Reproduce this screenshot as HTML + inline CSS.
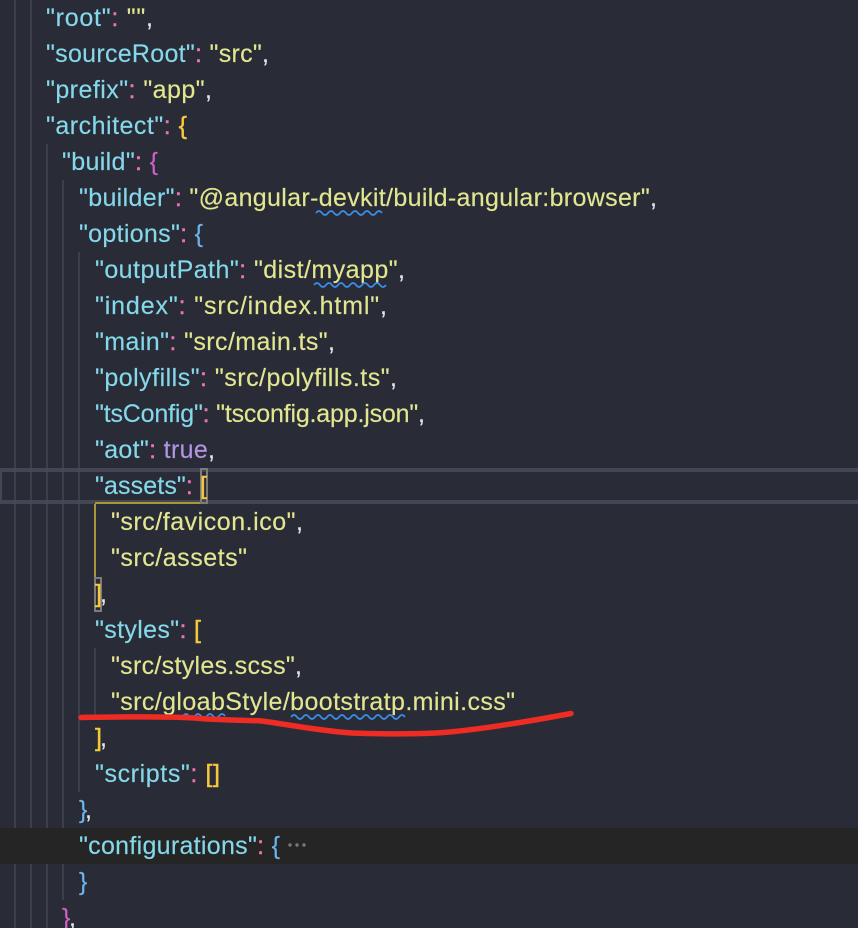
<!DOCTYPE html>
<html><head><meta charset="utf-8"><style>
html,body{margin:0;padding:0;background:#292b37;width:858px;height:928px;overflow:hidden}
svg{display:block}
text{font-family:"Liberation Sans",sans-serif;font-size:25px;fill:#e3e5e8;stroke:#e3e5e8;stroke-width:.15px;white-space:pre}
.k{fill:#85d8ea;stroke:#85d8ea}.s{fill:#e2e690;stroke:#e2e690}.c{fill:#ee75b0;stroke:#ee75b0;stroke-width:.4px}.y{fill:#f6c83c;stroke:#f6c83c;stroke-width:.4px}.p{fill:#cf62c8;stroke:#cf62c8}.b{fill:#6cb6ec;stroke:#6cb6ec}.t{fill:#b394e0;stroke:#b394e0}
</style></head><body>
<svg width="858" height="928" viewBox="0 0 858 928" xmlns="http://www.w3.org/2000/svg">
<rect width="858" height="928" fill="#292b37"/>
<g fill="#3c3e4b">
<rect x="14" y="0" width="2" height="928"/>
<rect x="30" y="0" width="2" height="928"/>
<rect x="46" y="144" width="2" height="784"/>
<rect x="62" y="180" width="2" height="720"/>
<rect x="78" y="252" width="2" height="540"/>
<rect x="94" y="648" width="2" height="72"/>
</g>
<g fill="#474959" fill-opacity=".9">
<rect x="0" y="468" width="858" height="4"/>
<rect x="0" y="500" width="858" height="4"/>
<rect x="0" y="472" width="2" height="28"/>
</g>
<rect x="0" y="828" width="858" height="36" fill="#252526"/>
<path d="M95 504V577M95 503H208" fill="none" stroke="#a8953a" stroke-width="2"/>
<rect x="201" y="469" width="6" height="34" fill="none" stroke="#7c7c7c" stroke-width="2"/>
<rect x="95" y="578" width="6" height="33" fill="none" stroke="#7c7c7c" stroke-width="2"/>

<text x="46" y="26" textLength="107"><tspan class="k">"root"</tspan><tspan class="c">:</tspan> <tspan class="s">""</tspan>,</text>
<text x="46" y="62" textLength="223"><tspan class="k">"sourceRoot"</tspan><tspan class="c">:</tspan> <tspan class="s">"src"</tspan>,</text>
<text x="46" y="98" textLength="166"><tspan class="k">"prefix"</tspan><tspan class="c">:</tspan> <tspan class="s">"app"</tspan>,</text>
<text x="46" y="134" textLength="141"><tspan class="k">"architect"</tspan><tspan class="c">:</tspan> <tspan class="y">{</tspan></text>
<text x="62" y="170" textLength="96"><tspan class="k">"build"</tspan><tspan class="c">:</tspan> <tspan class="p">{</tspan></text>
<text x="79" y="206" textLength="578"><tspan class="k">"builder"</tspan><tspan class="c">:</tspan> <tspan class="s">"@angular-devkit/build-angular:browser"</tspan>,</text>
<text x="79" y="242" textLength="124"><tspan class="k">"options"</tspan><tspan class="c">:</tspan> <tspan class="b">{</tspan></text>
<text x="95" y="278" textLength="310"><tspan class="k">"outputPath"</tspan><tspan class="c">:</tspan> <tspan class="s">"dist/myapp"</tspan>,</text>
<text x="95" y="314" textLength="292"><tspan class="k">"index"</tspan><tspan class="c">:</tspan> <tspan class="s">"src/index.html"</tspan>,</text>
<text x="95" y="350" textLength="240"><tspan class="k">"main"</tspan><tspan class="c">:</tspan> <tspan class="s">"src/main.ts"</tspan>,</text>
<text x="95" y="386" textLength="302"><tspan class="k">"polyfills"</tspan><tspan class="c">:</tspan> <tspan class="s">"src/polyfills.ts"</tspan>,</text>
<text x="95" y="422" textLength="330"><tspan class="k">"tsConfig"</tspan><tspan class="c">:</tspan> <tspan class="s">"tsconfig.app.json"</tspan>,</text>
<text x="95" y="458" textLength="120"><tspan class="k">"aot"</tspan><tspan class="c">:</tspan> <tspan class="t">true</tspan>,</text>
<text x="95" y="494" textLength="112"><tspan class="k">"assets"</tspan><tspan class="c">:</tspan> <tspan class="y">[</tspan></text>
<text x="111" y="530" textLength="192"><tspan class="s">"src/favicon.ico"</tspan>,</text>
<text x="111" y="566" textLength="136"><tspan class="s">"src/assets"</tspan></text>
<text x="95" y="602" textLength="12"><tspan class="y">]</tspan>,</text>
<text x="95" y="638" textLength="106"><tspan class="k">"styles"</tspan><tspan class="c">:</tspan> <tspan class="y">[</tspan></text>
<text x="111" y="674" textLength="191"><tspan class="s">"src/styles.scss"</tspan>,</text>
<text x="111" y="710" textLength="404"><tspan class="s">"src/gloabStyle/bootstratp.mini.css"</tspan></text>
<text x="95" y="746" textLength="12"><tspan class="y">]</tspan>,</text>
<text x="95" y="782" textLength="125"><tspan class="k">"scripts"</tspan><tspan class="c">:</tspan> <tspan class="y">[]</tspan></text>
<text x="79" y="818" textLength="13"><tspan class="b">}</tspan>,</text>
<text x="79" y="854" textLength="201"><tspan class="k">"configurations"</tspan><tspan class="c">:</tspan> <tspan class="b">{</tspan></text>
<text x="79" y="890"><tspan class="b">}</tspan></text>
<text x="62" y="926" textLength="14"><tspan class="p">}</tspan>,</text>

<g fill="#77787c"><circle cx="290" cy="845" r="1.7"/><circle cx="297" cy="845" r="1.7"/><circle cx="304" cy="845" r="1.7"/></g>

<g fill="none" stroke="#3a8ee8" stroke-width="1.8">
<path d="M316 213q3-4 6 0t6 0t6 0t6 0t6 0t6 0t6 0t6 0t6 0t6 0t6 0"/>
<path d="M314 285q3-4 6 0t6 0t6 0t6 0t6 0t6 0t6 0t6 0t6 0t6 0t6 0t6 0"/>
<path d="M183 716q3-4 6 0t6 0t6 0t6 0t6 0t6 0t6 0"/>
<path d="M291 717q3-4 6 0t6 0t6 0t6 0t6 0t6 0t6 0t6 0t6 0t6 0t6 0t6 0t6 0t6 0t6 0t6 0t6 0t6 0t6 0"/>
</g>
<path d="M81 717.5C110 717 160 716 195 718C215 720 240 720 262 721C285 724 320 731 352 733C380 734 415 734 436 733C470 731 520 723 571 713.5" fill="none" stroke="#ee2c24" stroke-width="5.5" stroke-linecap="round" stroke-linejoin="round"/>
</svg>
</body></html>
